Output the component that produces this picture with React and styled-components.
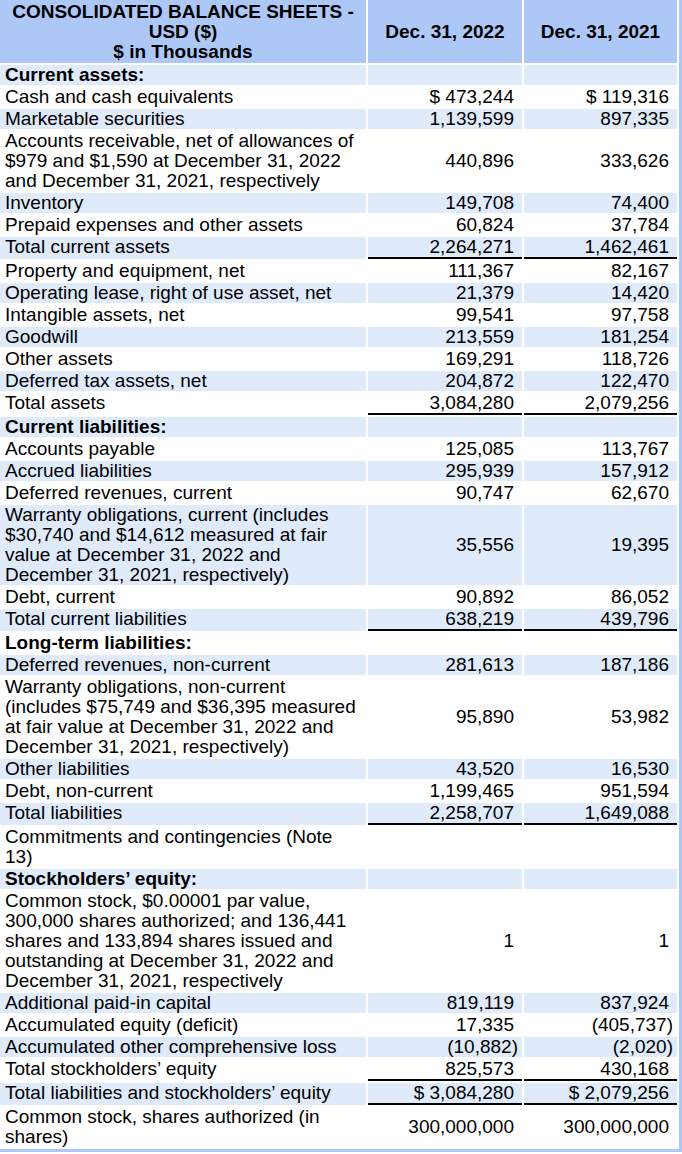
import styled, { createGlobalStyle } from "styled-components";

const GlobalStyle = createGlobalStyle`
	body {
		margin: 0;
		background: #fff;
		font-family: "Liberation Sans", Arial, Helvetica, sans-serif;
		color: #000;
	}
`;

const Page = styled.div`
	width: 682px;
	overflow: hidden;
`;

const Table = styled.table`
	table-layout: fixed;
	width: 684px;
	margin: -2px 0 0 -2px;
	border-collapse: separate;
	border-spacing: 2px;
	border-right: 3px solid #aec8f5;
	border-bottom: 3px solid #aec8f5;
	font-size: 19px;
	line-height: 20px;
`;

const Head = styled.th`
	background: #adc8f7;
	font-weight: bold;
	text-align: center;
	vertical-align: middle;
	padding: 2px 4px 1px;
`;

const Row = styled.tr`
	background: ${(props) => (props.$shade ? "#dfeafa" : "#fff")};
`;

const Label = styled.td`
	padding: 0 6px 0 5px;
	height: 20px;
	font-weight: ${(props) => (props.$bold ? "bold" : "normal")};
	vertical-align: top;
`;

const Num = styled.td`
	text-align: right;
	white-space: nowrap;
	vertical-align: middle;
	padding: 0 ${(props) => (props.$neg ? "4px" : "8px")} 0 0;
	border-bottom: ${(props) =>
		props.$line ? "2px solid #000" : "none"};
`;

const rows = [
	{ label: "Current assets:", bold: true },
	{ label: "Cash and cash equivalents", a: "$ 473,244", b: "$ 119,316" },
	{ label: "Marketable securities", a: "1,139,599", b: "897,335" },
	{
		label:
			"Accounts receivable, net of allowances of $979 and $1,590 at December 31, 2022 and December 31, 2021, respectively",
		a: "440,896",
		b: "333,626",
	},
	{ label: "Inventory", a: "149,708", b: "74,400" },
	{ label: "Prepaid expenses and other assets", a: "60,824", b: "37,784" },
	{ label: "Total current assets", a: "2,264,271", b: "1,462,461", line: true },
	{ label: "Property and equipment, net", a: "111,367", b: "82,167" },
	{ label: "Operating lease, right of use asset, net", a: "21,379", b: "14,420" },
	{ label: "Intangible assets, net", a: "99,541", b: "97,758" },
	{ label: "Goodwill", a: "213,559", b: "181,254" },
	{ label: "Other assets", a: "169,291", b: "118,726" },
	{ label: "Deferred tax assets, net", a: "204,872", b: "122,470" },
	{ label: "Total assets", a: "3,084,280", b: "2,079,256", line: true },
	{ label: "Current liabilities:", bold: true },
	{ label: "Accounts payable", a: "125,085", b: "113,767" },
	{ label: "Accrued liabilities", a: "295,939", b: "157,912" },
	{ label: "Deferred revenues, current", a: "90,747", b: "62,670" },
	{
		label:
			"Warranty obligations, current (includes $30,740 and $14,612 measured at fair value at December 31, 2022 and December 31, 2021, respectively)",
		a: "35,556",
		b: "19,395",
	},
	{ label: "Debt, current", a: "90,892", b: "86,052" },
	{ label: "Total current liabilities", a: "638,219", b: "439,796", line: true },
	{ label: "Long-term liabilities:", bold: true },
	{ label: "Deferred revenues, non-current", a: "281,613", b: "187,186" },
	{
		label:
			"Warranty obligations, non-current (includes $75,749 and $36,395 measured at fair value at December 31, 2022 and December 31, 2021, respectively)",
		a: "95,890",
		b: "53,982",
	},
	{ label: "Other liabilities", a: "43,520", b: "16,530" },
	{ label: "Debt, non-current", a: "1,199,465", b: "951,594" },
	{ label: "Total liabilities", a: "2,258,707", b: "1,649,088", line: true },
	{ label: "Commitments and contingencies (Note 13)" },
	{ label: "Stockholders\u2019 equity:", bold: true },
	{
		label:
			"Common stock, $0.00001 par value, 300,000 shares authorized; and 136,441 shares and 133,894 shares issued and outstanding at December 31, 2022 and December 31, 2021, respectively",
		a: "1",
		b: "1",
	},
	{ label: "Additional paid-in capital", a: "819,119", b: "837,924" },
	{ label: "Accumulated equity (deficit)", a: "17,335", b: "(405,737)" },
	{ label: "Accumulated other comprehensive loss", a: "(10,882)", b: "(2,020)" },
	{ label: "Total stockholders\u2019 equity", a: "825,573", b: "430,168", line: true },
	{
		label: "Total liabilities and stockholders\u2019 equity",
		a: "$ 3,084,280",
		b: "$ 2,079,256",
		line: true,
	},
	{
		label: "Common stock, shares authorized (in shares)",
		a: "300,000,000",
		b: "300,000,000",
	},
];

const isNeg = (v) => !!v && v.startsWith("(");

const App = () => {
	return (
		<>
			<GlobalStyle />
			<Page>
				<Table>
					<colgroup>
						<col style={{ width: "366px" }} />
						<col style={{ width: "154px" }} />
						<col style={{ width: "153px" }} />
					</colgroup>
					<thead>
						<tr>
							<Head>
								CONSOLIDATED BALANCE SHEETS - USD ($)
								<br />$ in Thousands
							</Head>
							<Head>Dec. 31, 2022</Head>
							<Head>Dec. 31, 2021</Head>
						</tr>
					</thead>
					<tbody>
						{rows.map((row, i) => (
							<Row key={row.label} $shade={i % 2 === 0}>
								<Label $bold={row.bold}>{row.label}</Label>
								<Num $neg={isNeg(row.a)} $line={row.line}>
									{row.a}
								</Num>
								<Num $neg={isNeg(row.b)} $line={row.line}>
									{row.b}
								</Num>
							</Row>
						))}
					</tbody>
				</Table>
			</Page>
		</>
	);
};

export default App;
